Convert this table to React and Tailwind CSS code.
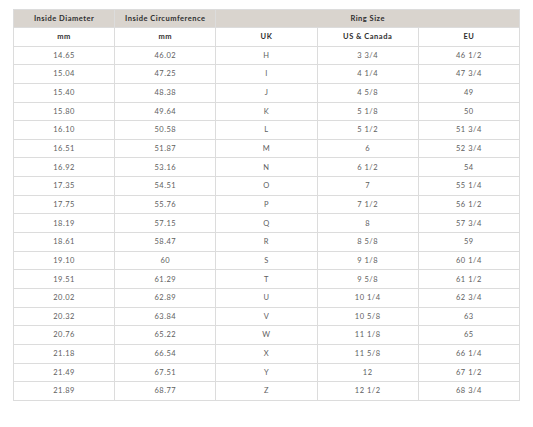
import React from "react";

const ROWS = [
  ["14.65", "46.02", "H", "3 3/4", "46 1/2"],
  ["15.04", "47.25", "I", "4 1/4", "47 3/4"],
  ["15.40", "48.38", "J", "4 5/8", "49"],
  ["15.80", "49.64", "K", "5 1/8", "50"],
  ["16.10", "50.58", "L", "5 1/2", "51 3/4"],
  ["16.51", "51.87", "M", "6", "52 3/4"],
  ["16.92", "53.16", "N", "6 1/2", "54"],
  ["17.35", "54.51", "O", "7", "55 1/4"],
  ["17.75", "55.76", "P", "7 1/2", "56 1/2"],
  ["18.19", "57.15", "Q", "8", "57 3/4"],
  ["18.61", "58.47", "R", "8 5/8", "59"],
  ["19.10", "60", "S", "9 1/8", "60 1/4"],
  ["19.51", "61.29", "T", "9 5/8", "61 1/2"],
  ["20.02", "62.89", "U", "10 1/4", "62 3/4"],
  ["20.32", "63.84", "V", "10 5/8", "63"],
  ["20.76", "65.22", "W", "11 1/8", "65"],
  ["21.18", "66.54", "X", "11 5/8", "66 1/4"],
  ["21.49", "67.51", "Y", "12", "67 1/2"],
  ["21.89", "68.77", "Z", "12 1/2", "68 3/4"],
];

const cell = "border border-[#dcdcdc] text-center align-middle p-0";

export default function App() {
  return (
    <div className="w-[533px] h-[427px] bg-white pt-[9px] pl-[13px] font-['Lato',sans-serif]">
      <table className="w-[507px] table-fixed border-collapse text-[7.5px]">
        <thead>
          <tr className="h-[18px] bg-[#d9d4ce] text-[#2e2e2e] font-bold tracking-[0.5px]">
            <th className={cell}>Inside Diameter</th>
            <th className={cell}>Inside Circumference</th>
            <th className={cell} colSpan={3}>
              Ring Size
            </th>
          </tr>
        </thead>
        <tbody>
          <tr className="h-[18.65px] text-[#2e2e2e] font-bold tracking-[0.5px]">
            <td className={cell}>mm</td>
            <td className={cell}>mm</td>
            <td className={cell}>UK</td>
            <td className={cell}>US &amp; Canada</td>
            <td className={cell}>EU</td>
          </tr>
          {ROWS.map((r) => (
            <tr key={r[0]} className="h-[18.65px] text-[#5e5e5e] tracking-[0.5px]">
              {r.map((v, i) => (
                <td key={i} className={cell}>
                  {v}
                </td>
              ))}
            </tr>
          ))}
        </tbody>
      </table>
    </div>
  );
}
